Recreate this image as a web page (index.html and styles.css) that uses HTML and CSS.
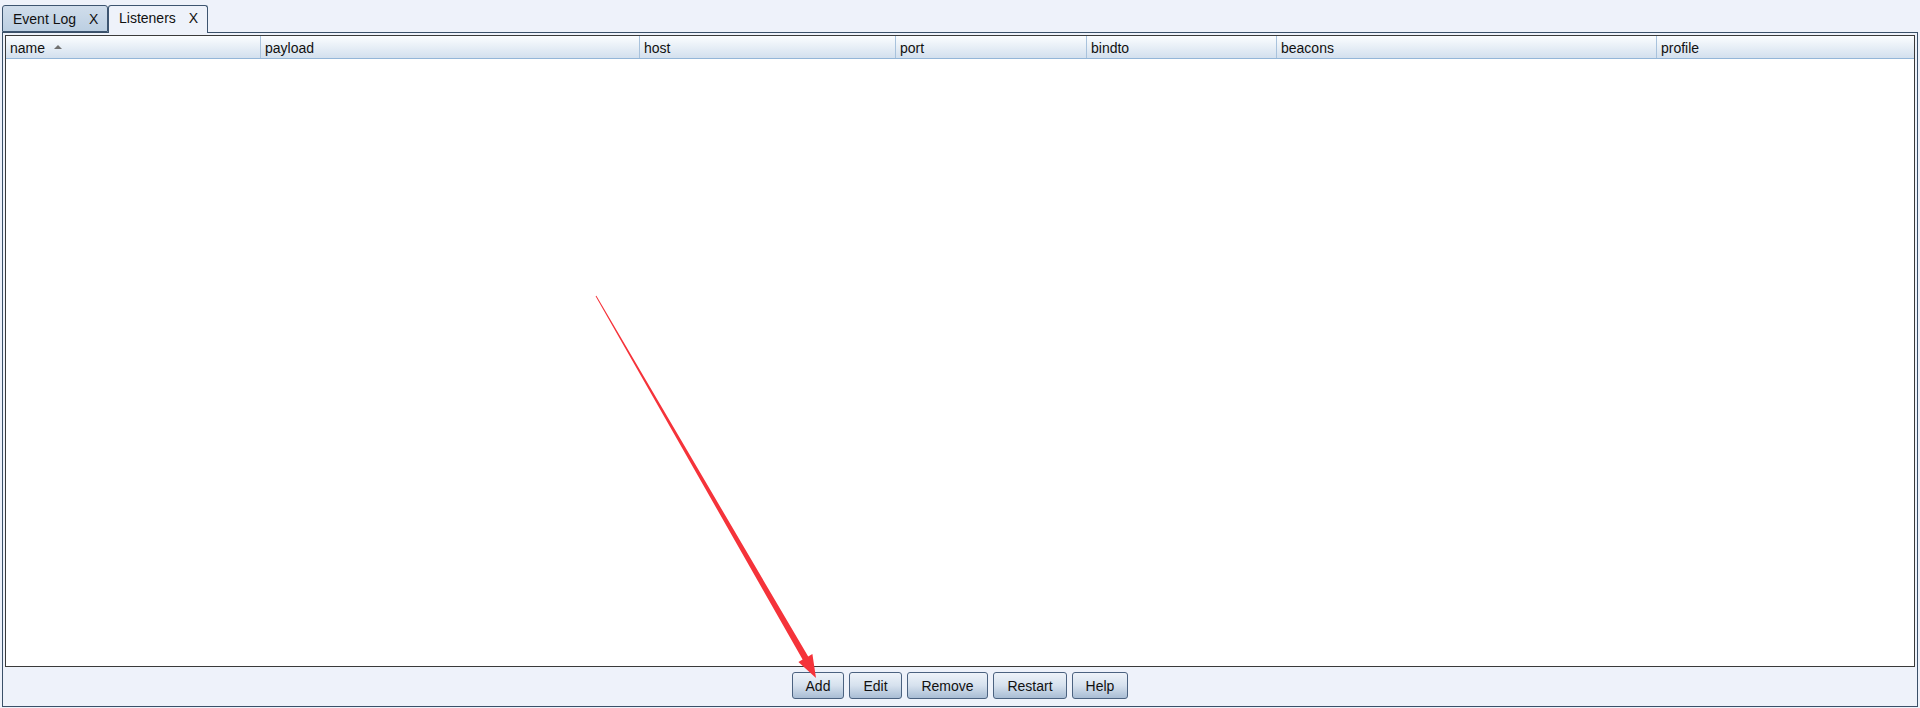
FILE: index.html
```html
<!DOCTYPE html>
<html lang="en">
<head>
    <meta charset="UTF-8">
    <title>Listeners</title>
    <link rel="stylesheet" href="styles.css">
</head>
<body>

    <div class="tabs">
        <div class="tab">Event Log <span class="tab-close">X</span></div>
        <div class="tab active">Listeners <span class="tab-close">X</span></div>
    </div>

    <div class="panel">
        <div class="table">
            <div class="table-head">
                <div class="col col-name">name <span class="sort"></span></div>
                <div class="col col-payload">payload</div>
                <div class="col col-host">host</div>
                <div class="col col-port">port</div>
                <div class="col col-bindto">bindto</div>
                <div class="col col-beacons">beacons</div>
                <div class="col col-profile">profile</div>
            </div>
            <div class="table-body"></div>
        </div>
        <div class="buttons">
            <button class="btn btn-add">Add</button>
            <button class="btn btn-edit">Edit</button>
            <button class="btn btn-remove">Remove</button>
            <button class="btn btn-restart">Restart</button>
            <button class="btn btn-help">Help</button>
        </div>
    </div>

    <!-- annotation arrow pointing at Add -->
    <svg class="arrow" width="1920" height="708" viewBox="0 0 1920 708">
        <polygon fill="#f5333a" points="596.4,295.8 595.6,296.2 802.6,659.4 798.4,661.9 816,678 812.4,654.1 808.2,656.6"/>
    </svg>

</body>
</html>
```

FILE: styles.css
```css
* {
    margin: 0;
    padding: 0;
    box-sizing: border-box;
}

body {
    width: 1920px;
    height: 708px;
    background: #eef2fa;
    font-family: 'Liberation Sans', Arial, sans-serif;
    color: #111;
    overflow: hidden;
    position: relative;
}

.tabs {
    display: flex;
    padding: 5px 0 0 2px;
    height: 32px;
}

.tab {
    height: 27px;
    padding: 5px 0 0 10px;
    width: 106px;
    font-size: 14px;
    background: linear-gradient(#d0ddeb, #bccfe2);
    border: 1px solid #3d5570;
    border-radius: 3px 3px 0 0;
    color: #111;
}

.tab.active {
    width: 100px;
    height: 28px;
    padding-top: 4px;
    background: #eef2fa;
    border-bottom: none;
    margin-bottom: -1px;
    position: relative;
    z-index: 1;
}

.tab-close {
    margin-left: 9px;
}

.panel {
    margin: 0 2px;
    width: 1916px;
    height: 675px;
    border: 1px solid #3a5068;
    padding: 2px 2px 0 2px;
}

.table {
    height: 632px;
    border: 1px solid #3a3a3a;
    background: #fff;
    display: flex;
    flex-direction: column;
}

.table-head {
    display: flex;
    height: 23px;
    background: linear-gradient(#fbfdff, #d3e0ee);
    border-bottom: 1px solid #94b6d8;
    font-size: 14px;
}

.col {
    padding: 4px 0 0 4px;
    border-right: 1px solid #a8c2dc;
    white-space: nowrap;
}

.col-name { width: 255px; }
.col-payload { width: 379px; }
.col-host { width: 256px; }
.col-port { width: 191px; }
.col-bindto { width: 190px; }
.col-beacons { width: 380px; }
.col-profile { flex: 1; border-right: none; }

.sort {
    display: inline-block;
    width: 0;
    height: 0;
    border-left: 4px solid transparent;
    border-right: 4px solid transparent;
    border-bottom: 4px solid #707070;
    margin-left: 5px;
    vertical-align: 4px;
}

.table-body {
    flex: 1;
}

.buttons {
    display: flex;
    justify-content: center;
    gap: 5px;
    padding-top: 5px;
}

.btn {
    height: 27px;
    font-family: 'Liberation Sans', Arial, sans-serif;
    font-size: 14px;
    color: #111;
    background: linear-gradient(#eef3f9, #d6e1ee 50%, #a9bdd4);
    border: 1px solid #4b6280;
    border-radius: 3px;
}

.btn-add { width: 52px; }
.btn-edit { width: 53px; }
.btn-remove { width: 81px; }
.btn-restart { width: 74px; }
.btn-help { width: 56px; }

.arrow {
    position: absolute;
    left: 0;
    top: 0;
    pointer-events: none;
}
```
